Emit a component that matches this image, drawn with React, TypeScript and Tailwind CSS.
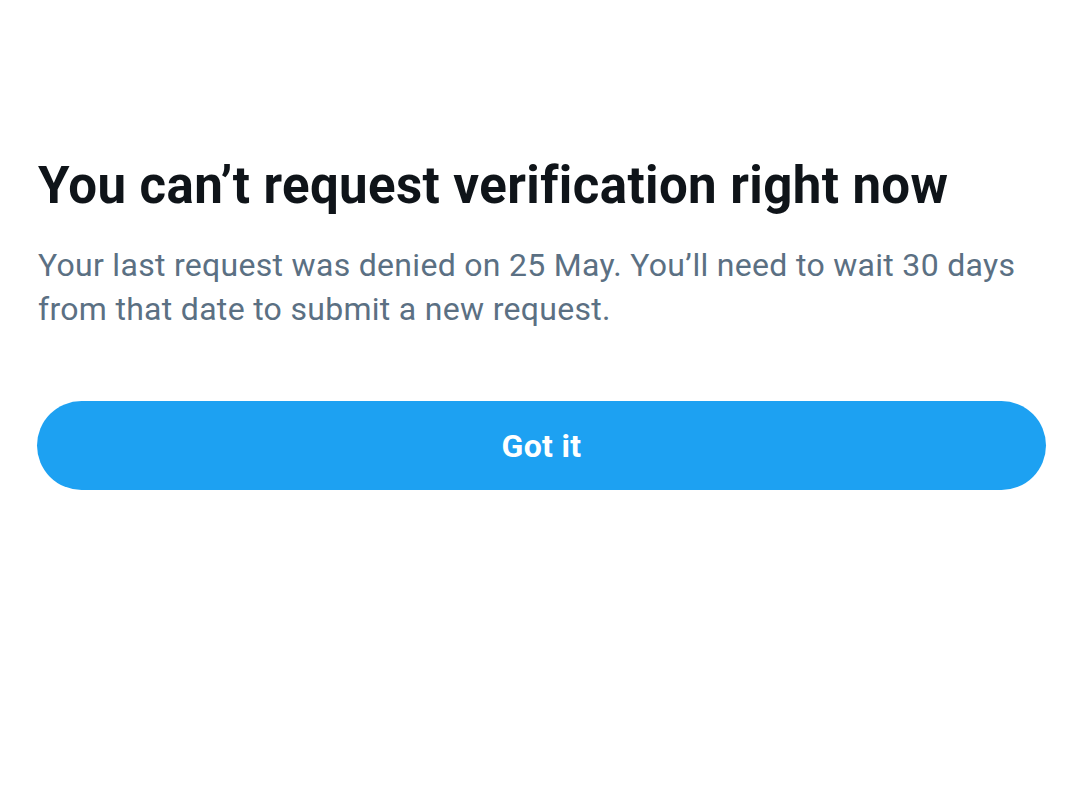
import React from 'react';

export default function App() {
  return (
    <div className="w-[1080px] h-[806px] bg-white font-['Roboto',sans-serif] px-[37px] pt-[152px]">
      <h1 className="text-[51px] leading-[68px] font-bold text-[#0f1419] pl-[1px] tracking-[0.4px]">
        You can’t request verification right now
      </h1>
      <p className="mt-[23px] text-[32px] leading-[44px] text-[#5b7083] pl-[1px] tracking-[0.3px]">
        Your last request was denied on 25 May. You’ll need to wait 30 days
        <br />
        from that date to submit a new request.
      </p>
      <button className="mt-[70px] w-[1009px] h-[89px] rounded-full bg-[#1da1f2] text-white text-[32px] font-bold tracking-[0.3px] flex items-center justify-center">
        Got it
      </button>
    </div>
  );
}
